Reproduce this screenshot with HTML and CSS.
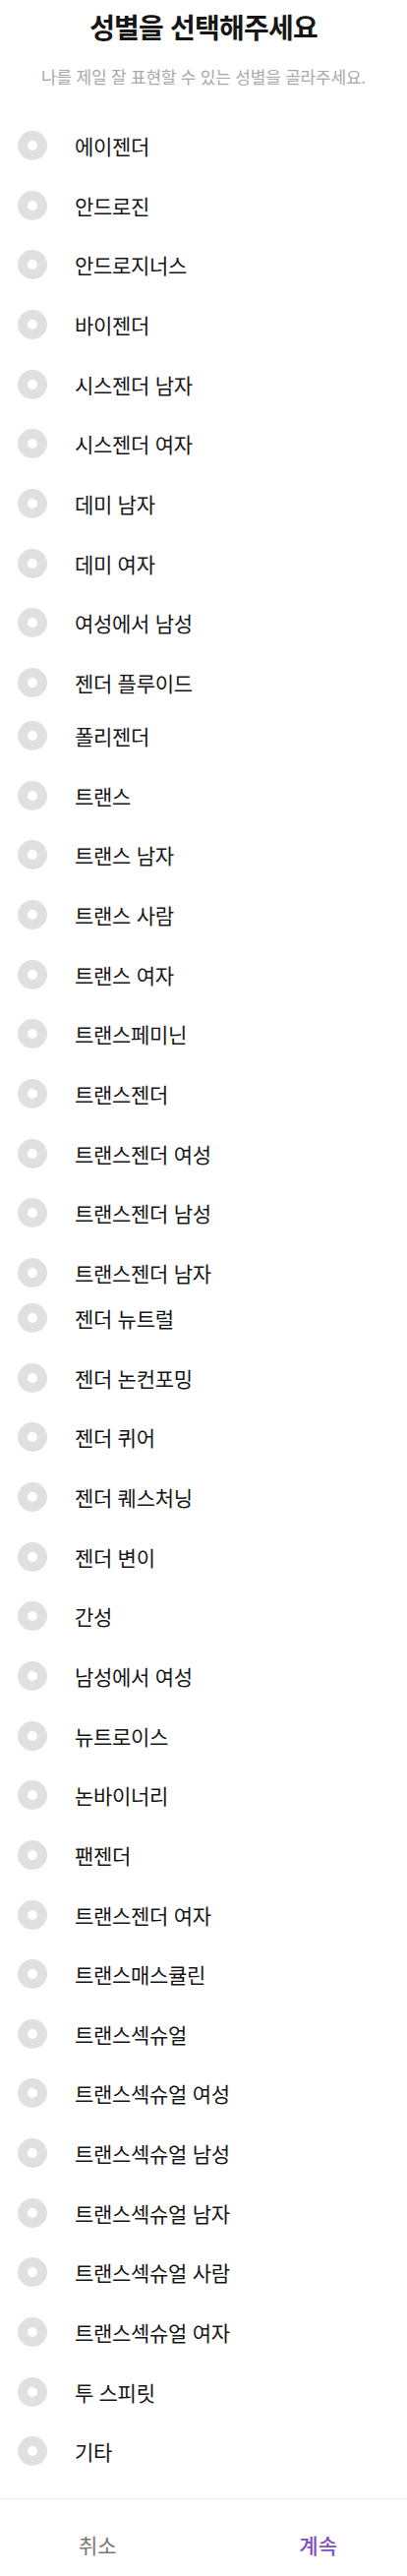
FILE: index.html
```html
<!DOCTYPE html>
<html lang="ko">
<head>
<meta charset="utf-8">
<title>성별을 선택해주세요</title>
<link rel="stylesheet" href="styles.css">
</head>
<body>
<div class="page">
  <header class="head">
    <h1 class="title">성별을 선택해주세요</h1>
    <p class="subtitle">나를 제일 잘 표현할 수 있는 성별을 골라주세요.</p>
  </header>
  <ul class="options">
    <li class="option"><span class="radio"></span><span class="label">에이젠더</span></li>
    <li class="option"><span class="radio"></span><span class="label">안드로진</span></li>
    <li class="option"><span class="radio"></span><span class="label">안드로지너스</span></li>
    <li class="option"><span class="radio"></span><span class="label">바이젠더</span></li>
    <li class="option"><span class="radio"></span><span class="label">시스젠더 남자</span></li>
    <li class="option"><span class="radio"></span><span class="label">시스젠더 여자</span></li>
    <li class="option"><span class="radio"></span><span class="label">데미 남자</span></li>
    <li class="option"><span class="radio"></span><span class="label">데미 여자</span></li>
    <li class="option"><span class="radio"></span><span class="label">여성에서 남성</span></li>
    <li class="option"><span class="radio"></span><span class="label">젠더 플루이드</span></li>
    <li class="option option-pull-a"><span class="radio"></span><span class="label">폴리젠더</span></li>
    <li class="option"><span class="radio"></span><span class="label">트랜스</span></li>
    <li class="option"><span class="radio"></span><span class="label">트랜스 남자</span></li>
    <li class="option"><span class="radio"></span><span class="label">트랜스 사람</span></li>
    <li class="option"><span class="radio"></span><span class="label">트랜스 여자</span></li>
    <li class="option"><span class="radio"></span><span class="label">트랜스페미닌</span></li>
    <li class="option"><span class="radio"></span><span class="label">트랜스젠더</span></li>
    <li class="option"><span class="radio"></span><span class="label">트랜스젠더 여성</span></li>
    <li class="option"><span class="radio"></span><span class="label">트랜스젠더 남성</span></li>
    <li class="option"><span class="radio"></span><span class="label">트랜스젠더 남자</span></li>
    <li class="option option-pull-b"><span class="radio"></span><span class="label">젠더 뉴트럴</span></li>
    <li class="option"><span class="radio"></span><span class="label">젠더 논컨포밍</span></li>
    <li class="option"><span class="radio"></span><span class="label">젠더 퀴어</span></li>
    <li class="option"><span class="radio"></span><span class="label">젠더 퀘스처닝</span></li>
    <li class="option"><span class="radio"></span><span class="label">젠더 변이</span></li>
    <li class="option"><span class="radio"></span><span class="label">간성</span></li>
    <li class="option"><span class="radio"></span><span class="label">남성에서 여성</span></li>
    <li class="option"><span class="radio"></span><span class="label">뉴트로이스</span></li>
    <li class="option"><span class="radio"></span><span class="label">논바이너리</span></li>
    <li class="option"><span class="radio"></span><span class="label">팬젠더</span></li>
    <li class="option"><span class="radio"></span><span class="label">트랜스젠더 여자</span></li>
    <li class="option"><span class="radio"></span><span class="label">트랜스매스큘린</span></li>
    <li class="option"><span class="radio"></span><span class="label">트랜스섹슈얼</span></li>
    <li class="option"><span class="radio"></span><span class="label">트랜스섹슈얼 여성</span></li>
    <li class="option"><span class="radio"></span><span class="label">트랜스섹슈얼 남성</span></li>
    <li class="option"><span class="radio"></span><span class="label">트랜스섹슈얼 남자</span></li>
    <li class="option"><span class="radio"></span><span class="label">트랜스섹슈얼 사람</span></li>
    <li class="option"><span class="radio"></span><span class="label">트랜스섹슈얼 여자</span></li>
    <li class="option"><span class="radio"></span><span class="label">투 스피릿</span></li>
    <li class="option"><span class="radio"></span><span class="label">기타</span></li>
  </ul>
  <footer class="actions">
    <button class="btn btn-cancel" type="button">취소</button>
    <button class="btn btn-continue" type="button">계속</button>
  </footer>
</div>
</body>
</html>
```

FILE: styles.css
```css
* {
  box-sizing: border-box;
}

html, body {
  margin: 0;
  padding: 0;
  background: #ffffff;
}

body {
  font-family: "Noto Sans CJK KR", "Noto Sans", sans-serif;
  color: #161616;
}

.page {
  width: 414px;
  height: 2619px;
  display: flex;
  flex-direction: column;
}

.head {
  display: flex;
  flex-direction: column;
  align-items: center;
  padding-top: 8px;
}

.title {
  margin: 0;
  font-size: 28px;
  line-height: 38px;
  font-weight: 700;
  letter-spacing: -0.8px;
  color: #161616;
}

.subtitle {
  margin: 20px 0 0;
  font-size: 17px;
  line-height: 24px;
  font-weight: 400;
  letter-spacing: -0.2px;
  color: #a8a8a8;
}

.options {
  list-style: none;
  margin: 27.7px 0 0;
  padding: 0;
}

.option {
  display: flex;
  align-items: center;
  height: 60.67px;
  padding-left: 18px;
  gap: 28px;
}

.option-pull-a {
  margin-top: -6.6px;
}

.option-pull-b {
  margin-top: -14.6px;
}

.radio {
  flex: none;
  width: 30px;
  height: 30px;
  border-radius: 50%;
  border: 10.5px solid #e0e0e0;
  background: #ffffff;
}

.label {
  font-size: 21px;
  line-height: 28px;
  letter-spacing: -0.3px;
  color: #161616;
}

.actions {
  margin-top: auto;
  height: 79px;
  border-top: 1px solid #ececec;
  display: flex;
  justify-content: space-between;
  align-items: flex-start;
  padding: 32px 71px 0 80px;
}

.btn {
  border: 0;
  background: none;
  padding: 0;
  margin: 0;
  font-family: "Noto Sans CJK KR", "Noto Sans", sans-serif;
  font-size: 21px;
  line-height: 28px;
}

.btn-cancel {
  color: #777777;
}

.btn-continue {
  color: #7d4fc0;
  font-weight: 500;
}
```
